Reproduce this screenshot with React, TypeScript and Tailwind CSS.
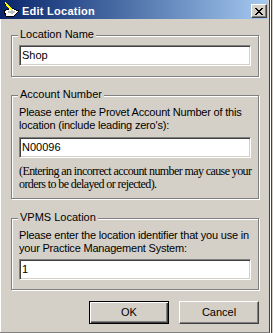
import React from "react";

const sans = "font-['Liberation_Sans',Arial,sans-serif]";

const TitleIcon = () => (
  <svg width="17" height="16" viewBox="0 0 17 16" shapeRendering="crispEdges">
    <polygon points="1,9 8,6 16,9 10,15 3,14" fill="#ffffff" stroke="#000000" strokeWidth="1" />
    <polygon points="4,10 9,8 13,10 9,12" fill="#c0c0c0" />
    <line x1="2" y1="1" x2="9" y2="8" stroke="#ffff00" strokeWidth="2" />
    <line x1="1" y1="1" x2="3" y2="3" stroke="#000000" strokeWidth="1" />
  </svg>
);

const CloseGlyph = () => (
  <svg width="8" height="7" viewBox="0 0 8 7" shapeRendering="crispEdges">
    <path
      fill="#000000"
      d="M0 0h2v1H0zM6 0h2v1H6zM1 1h2v1H1zM5 1h2v1H5zM2 2h4v1H2zM3 3h2v1H3zM2 4h4v1H2zM1 5h2v1H1zM5 5h2v1H5zM0 6h2v1H0zM6 6h2v1H6z"
    />
  </svg>
);

const GroupBox = ({
  label,
  className,
  children,
}: {
  label: string;
  className: string;
  children: React.ReactNode;
}) => (
  <div
    className={`relative w-[248px] shrink-0 border border-[#808080] shadow-[inset_1px_1px_0_#ffffff,1px_1px_0_#ffffff] ${className}`}
  >
    <span className="absolute -top-[8px] left-[6px] bg-[#d4d0c8] px-[2px] text-[11px] leading-[13px] whitespace-nowrap text-black">
      {label}
    </span>
    {children}
  </div>
);

const TextBox = ({ value }: { value: string }) => (
  <div className="flex h-[21px] w-[232px] items-center border border-t-[#808080] border-l-[#808080] border-r-white border-b-white bg-white pl-[2px] text-[11px] leading-[13px] text-black shadow-[inset_1px_1px_0_#404040,inset_-1px_-1px_0_#d4d0c8]">
    {value}
  </div>
);

const Prompt = ({ children }: { children: React.ReactNode }) => (
  <p className="text-[11px] leading-[13px] tracking-[-0.2px] whitespace-nowrap text-black">{children}</p>
);

export default function App() {
  return (
    <div className={`flex h-[333px] w-[273px] overflow-hidden bg-[#d4d0c8] ${sans}`}>
      {/* dialog window */}
      <div className="flex h-[333px] w-[270px] shrink-0 flex-col border-r border-b border-r-[#404040] border-b-[#808080] bg-[#d4d0c8] pr-[1px]">
        {/* title bar */}
        <div className="flex h-[19px] shrink-0 items-start bg-linear-to-r from-[#0a246a] to-[#a6caf0] pl-[3px] pr-[1px]">
          <div className="mt-[2px]">
            <TitleIcon />
          </div>
          <span className="ml-[2px] mt-[5px] text-[11px] font-bold leading-[13px] tracking-[0.25px] whitespace-nowrap text-white">
            Edit Location
          </span>
          <div className="ml-auto mt-[4px] flex h-[14px] w-[16px] items-center justify-center border border-t-white border-l-white border-r-[#404040] border-b-[#404040] bg-[#d4d0c8] shadow-[inset_-1px_-1px_0_#808080]">
            <CloseGlyph />
          </div>
        </div>

        {/* body */}
        <div className="flex flex-1 flex-col border-l border-l-white pl-[10px] pt-[16px]">
          <GroupBox label="Location Name" className="pl-[7px] pt-[9px] pb-[10px]">
            <TextBox value="Shop" />
          </GroupBox>

          <GroupBox label="Account Number" className="mt-[18px] pl-[7px] pt-[10px] pb-[7px]">
            <Prompt>
              Please enter the Provet Account Number of this
              <br />
              location (include leading zero's):
            </Prompt>
            <div className="mt-[5px]">
              <TextBox value="N00096" />
            </div>
            <p className="mt-[7px] font-['Liberation_Serif','Times_New_Roman',serif] text-[12px] leading-[13px] tracking-[-0.6px] whitespace-nowrap text-black">
              (Entering an incorrect account number may cause your
              <br />
              orders to be delayed or rejected).
            </p>
          </GroupBox>

          <GroupBox label="VPMS Location" className="mt-[19px] pl-[7px] pt-[10px] pb-[9px]">
            <Prompt>
              Please enter the location identifier that you use in
              <br />
              your Practice Management System:
            </Prompt>
            <div className="mt-[4px]">
              <TextBox value="1" />
            </div>
          </GroupBox>

          <div className="mt-[11px] flex w-[248px] justify-end gap-[10px]">
            <button className="flex h-[23px] w-[80px] items-center justify-center border border-black bg-[#d4d0c8] text-[11px] leading-[13px] text-black shadow-[inset_1px_1px_0_#ffffff,inset_-1px_-1px_0_#404040,inset_-2px_-2px_0_#808080]">
              OK
            </button>
            <button className="flex h-[23px] w-[80px] items-center justify-center border border-t-white border-l-white border-r-[#404040] border-b-[#404040] bg-[#d4d0c8] text-[11px] leading-[13px] text-black shadow-[inset_-1px_-1px_0_#808080]">
              Cancel
            </button>
          </div>
        </div>
      </div>

      {/* edge of the window behind */}
      <div className="flex h-[333px] w-[3px] shrink-0">
        <div className="w-[1px] bg-white" />
        <div className="w-[1px] bg-[#404040]" />
        <div className="w-[1px] bg-[#d4d0c8]" />
      </div>
    </div>
  );
}
